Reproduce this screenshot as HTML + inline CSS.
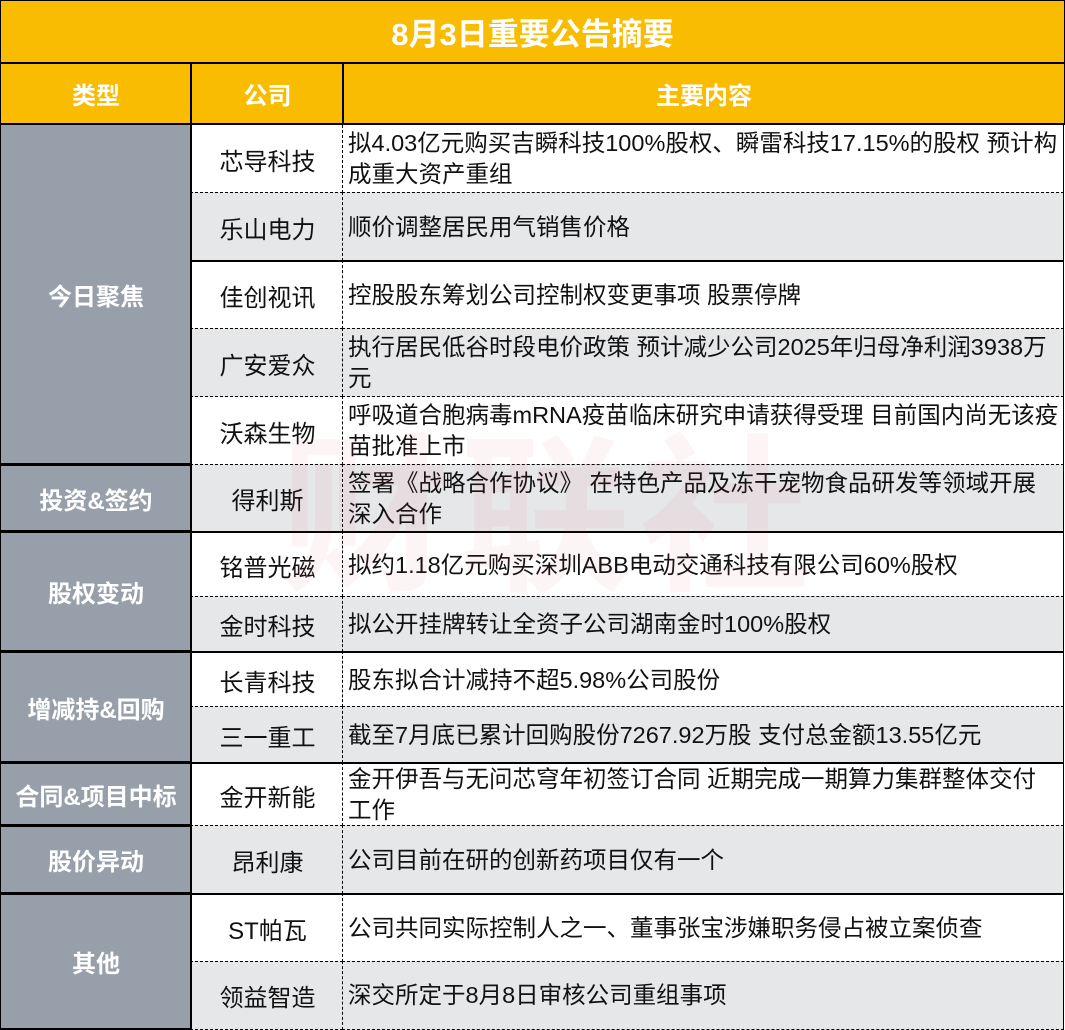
<!DOCTYPE html>
<html><head><meta charset="utf-8"><style>
*{margin:0;padding:0;box-sizing:border-box}
body{width:1065px;height:1030px;background:#fff;position:relative;overflow:hidden;font-family:"Liberation Sans","Noto Sans CJK SC",sans-serif}
.a{position:absolute}
.title{left:0;top:0;width:1065px;height:62px;background:#F9BC00;color:#fff;font-size:31px;font-weight:bold;display:flex;align-items:center;justify-content:center;border:1px solid #000;border-bottom:none}
.hd{top:62px;height:63px;background:#F9BC00;color:#fff;font-size:24px;font-weight:bold;display:flex;align-items:center;justify-content:center;border-top:2px solid #000;border-bottom:2px solid #000}
.cat{left:0;width:191px;background:#97A0AA;color:#fff;font-weight:bold;font-size:24px;display:flex;align-items:center;justify-content:center;border-bottom:2px solid #000;border-left:1px solid #000}
.co{left:190px;width:153px;font-size:24px;display:flex;align-items:center;justify-content:center;border-left:2px solid #000;color:#111}
.ct{left:342px;width:722px;font-size:23.5px;font-family:"Liberation Sans Narrow","Liberation Sans","Noto Sans CJK SC",sans-serif;display:flex;align-items:center;padding-left:5px;line-height:31px;border-left:1px dashed #000;border-right:1px solid #000;color:#111;white-space:nowrap}
.g{background:#E6E7E9}
.d{border-top:1px dashed #000}
.s{border-top:2px solid #000}
.wm{left:280px;top:380px;font-size:170px;font-weight:bold;color:rgba(220,60,80,0.06);letter-spacing:10px;white-space:nowrap}
</style></head><body>
<div class="a title">8月3日重要公告摘要</div>
<div class="a hd" style="left:0;width:191px;border-left:1px solid #000">类型</div>
<div class="a hd" style="left:190px;width:153px;border-left:2px solid #000">公司</div>
<div class="a hd" style="left:342px;width:723px;border-left:2px solid #000;border-right:1px solid #000">主要内容</div>

<div class="a cat" style="top:125px;height:340px">今日聚焦</div>
<div class="a cat s" style="top:464px;height:68px">投资&amp;签约</div>
<div class="a cat s" style="top:531px;height:121px">股权变动</div>
<div class="a cat s" style="top:651px;height:112px">增减持&amp;回购</div>
<div class="a cat s" style="top:762px;height:64px">合同&amp;项目中标</div>
<div class="a cat s" style="top:825px;height:69px">股价异动</div>
<div class="a cat s" style="top:893px;height:137px">其他</div>

<div class="a co" style="top:125px;height:68px">芯导科技</div>
<div class="a ct" style="top:125px;height:68px">拟4.03亿元购买吉瞬科技100%股权、瞬雷科技17.15%的股权 预计构<br>成重大资产重组</div>
<div class="a co g d" style="top:192px;height:69px">乐山电力</div>
<div class="a ct g d" style="top:192px;height:69px">顺价调整居民用气销售价格</div>
<div class="a co s" style="top:260px;height:69px">佳创视讯</div>
<div class="a ct s" style="top:260px;height:69px">控股股东筹划公司控制权变更事项 股票停牌</div>
<div class="a co g d" style="top:328px;height:69px">广安爱众</div>
<div class="a ct g d" style="top:328px;height:69px">执行居民低谷时段电价政策 预计减少公司2025年归母净利润3938万<br>元</div>
<div class="a co d" style="top:396px;height:69px">沃森生物</div>
<div class="a ct d" style="top:396px;height:69px">呼吸道合胞病毒mRNA疫苗临床研究申请获得受理 目前国内尚无该疫<br>苗批准上市</div>
<div class="a co g d" style="top:464px;height:68px">得利斯</div>
<div class="a ct g d" style="top:464px;height:68px">签署《战略合作协议》 在特色产品及冻干宠物食品研发等领域开展<br>深入合作</div>
<div class="a co s" style="top:531px;height:66px">铭普光磁</div>
<div class="a ct s" style="top:531px;height:66px">拟约1.18亿元购买深圳ABB电动交通科技有限公司60%股权</div>
<div class="a co g d" style="top:596px;height:56px">金时科技</div>
<div class="a ct g d" style="top:596px;height:56px">拟公开挂牌转让全资子公司湖南金时100%股权</div>
<div class="a co s" style="top:651px;height:56px">长青科技</div>
<div class="a ct s" style="top:651px;height:56px">股东拟合计减持不超5.98%公司股份</div>
<div class="a co g d" style="top:706px;height:57px">三一重工</div>
<div class="a ct g d" style="top:706px;height:57px">截至7月底已累计回购股份7267.92万股 支付总金额13.55亿元</div>
<div class="a co s" style="top:762px;height:64px">金开新能</div>
<div class="a ct s" style="top:762px;height:64px">金开伊吾与无问芯穹年初签订合同 近期完成一期算力集群整体交付<br>工作</div>
<div class="a co g d" style="top:825px;height:69px">昂利康</div>
<div class="a ct g d" style="top:825px;height:69px">公司目前在研的创新药项目仅有一个</div>
<div class="a co s" style="top:893px;height:69px">ST帕瓦</div>
<div class="a ct s" style="top:893px;height:69px">公司共同实际控制人之一、董事张宝涉嫌职务侵占被立案侦查</div>
<div class="a co g d" style="top:961px;height:69px;border-bottom:1px dashed #000">领益智造</div>
<div class="a ct g d" style="top:961px;height:69px;border-bottom:1px dashed #000">深交所定于8月8日审核公司重组事项</div>
<div class="a wm">财联社</div>
</body></html>
